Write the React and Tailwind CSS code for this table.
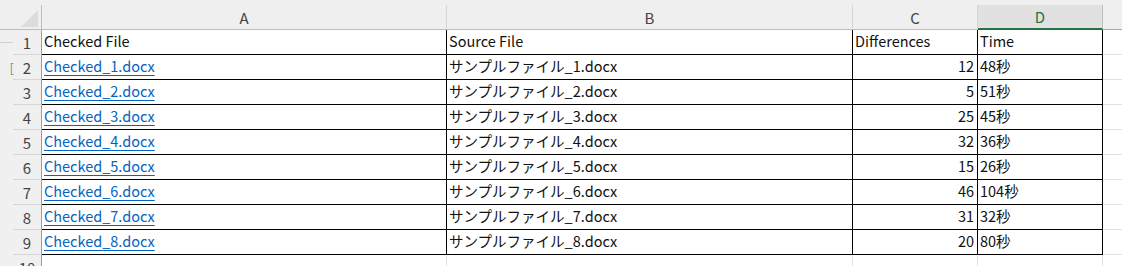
import React from "react";

const rows = [
  ["Checked_1.docx", "サンプルファイル_1.docx", 12, "48秒"],
  ["Checked_2.docx", "サンプルファイル_2.docx", 5, "51秒"],
  ["Checked_3.docx", "サンプルファイル_3.docx", 25, "45秒"],
  ["Checked_4.docx", "サンプルファイル_4.docx", 32, "36秒"],
  ["Checked_5.docx", "サンプルファイル_5.docx", 15, "26秒"],
  ["Checked_6.docx", "サンプルファイル_6.docx", 46, "104秒"],
  ["Checked_7.docx", "サンプルファイル_7.docx", 31, "32秒"],
  ["Checked_8.docx", "サンプルファイル_8.docx", 20, "80秒"],
];

const font = { fontFamily: '"Noto Sans CJK JP", "Noto Sans", sans-serif' };

function RowNum({ n }) {
  return (
    <div className="w-[29px] shrink-0 h-full bg-[#f0f0f0] border-r border-[#9c9c9c] border-b border-b-[#d6d6d6] flex items-center justify-center text-[15px] text-[#444]">
      {n}
    </div>
  );
}

export default function App() {
  return (
    <div
      className="w-[1122px] h-[266px] bg-white overflow-hidden text-[14.5px] text-[#111] leading-none"
      style={font}
    >
      {/* column header */}
      <div className="flex h-[30px] bg-[#efefef] pt-[5px]">
        <div className="w-[13px] shrink-0 border-b border-[#bdbdbd]" />
        <div className="w-[29px] shrink-0 border-b border-r border-[#bdbdbd] relative">
          <svg className="absolute left-[8px] top-[5px]" width="17" height="17" viewBox="0 0 17 17">
            <polygon points="17,0 17,17 0,17" fill="#dcdcdc" />
          </svg>
        </div>
        <div className="w-[405px] shrink-0 border-b border-r border-[#bdbdbd] border-r-[#d6d6d6] flex items-center justify-center text-[15px] text-[#444]">A</div>
        <div className="w-[406px] shrink-0 border-b border-r border-[#bdbdbd] border-r-[#d6d6d6] flex items-center justify-center text-[15px] text-[#444]">B</div>
        <div className="w-[125px] shrink-0 border-b border-r border-[#bdbdbd] border-r-[#d6d6d6] flex items-center justify-center text-[15px] text-[#444]">C</div>
        <div className="w-[125px] shrink-0 bg-[#e1e1e1] border-b-2 border-r border-b-[#217346] border-r-[#bdbdbd] flex items-center justify-center text-[15px] text-[#217346]">D</div>
        <div className="flex-1 border-b border-[#a8a8a8]" />
      </div>

      {/* row 1 */}
      <div className="flex h-[25px]">
        <div className="w-[13px] shrink-0 bg-[#f0f0f0] relative">
          <div className="absolute left-0 right-0 top-[12px] h-px bg-[#d0d0d0]" />
        </div>
        <RowNum n={1} />
        <div className="w-[405px] shrink-0 border-b border-r border-black flex items-center pl-[2px] pb-px">Checked File</div>
        <div className="w-[406px] shrink-0 border-b border-r border-black flex items-center pl-[2px] pb-px">Source File</div>
        <div className="w-[125px] shrink-0 border-b border-r border-black flex items-center pl-[2px] pb-px">Differences</div>
        <div className="w-[125px] shrink-0 border-b border-r border-black flex items-center pl-[2px] pb-px">Time</div>
        <div className="flex-1 border-b border-[#e1e1e1]" />
      </div>

      {rows.map((r, i) => (
        <div key={i} className="flex h-[25px]">
          <div className="w-[13px] shrink-0 bg-[#f0f0f0] relative flex items-center justify-end">
            {i === 0 && <span className="text-[13px] text-[#888] mr-[-1px]">[</span>}
          </div>
          <RowNum n={i + 2} />
          <div className="w-[405px] shrink-0 border-b border-r border-black flex items-center pl-[2px] pb-px">
            <span className="text-[#0563c1] underline decoration-[#0563c1] underline-offset-[3px]">{r[0]}</span>
          </div>
          <div className="w-[406px] shrink-0 border-b border-r border-black flex items-center pl-[2px] pb-px">{r[1]}</div>
          <div className="w-[125px] shrink-0 border-b border-r border-black flex items-center justify-end pr-[3px] pb-px">{r[2]}</div>
          <div className="w-[125px] shrink-0 border-b border-r border-black flex items-center pl-[2px] pb-px">{r[3]}</div>
          <div className="flex-1 border-b border-[#e1e1e1]" />
        </div>
      ))}

      {/* row 10 */}
      <div className="flex h-[25px]">
        <div className="w-[13px] shrink-0 bg-[#f0f0f0]" />
        <RowNum n={10} />
        <div className="w-[405px] shrink-0 border-r border-[#e1e1e1]" />
        <div className="w-[406px] shrink-0 border-r border-[#e1e1e1]" />
        <div className="w-[125px] shrink-0 border-r border-[#e1e1e1]" />
        <div className="w-[125px] shrink-0 border-r border-[#e1e1e1]" />
        <div className="flex-1" />
      </div>
    </div>
  );
}
